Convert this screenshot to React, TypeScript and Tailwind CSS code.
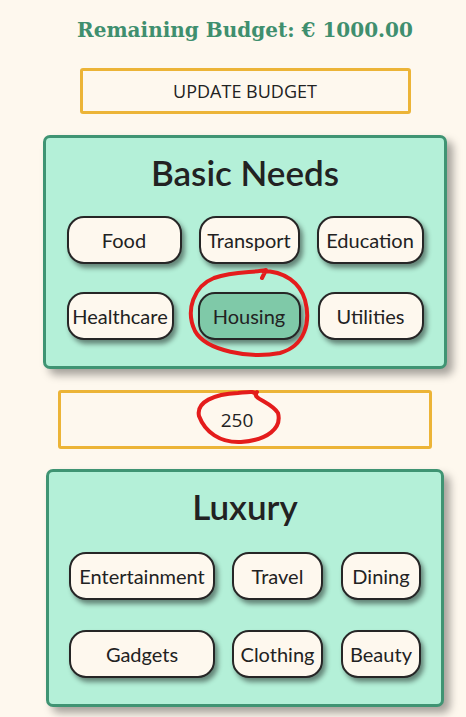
import React, { useState } from 'react';

const basicRows = [
  [
    { label: 'Food', cls: 'w-[115px]' },
    { label: 'Transport', cls: 'ml-[17px] w-[101px]' },
    { label: 'Education', cls: 'ml-[17px] w-[107px]' },
  ],
  [
    { label: 'Healthcare', cls: 'w-[107px]' },
    { label: 'Housing', cls: 'ml-[24px] w-[103px]' },
    { label: 'Utilities', cls: 'ml-[17px] w-[106px]' },
  ],
];

const luxuryRows = [
  [
    { label: 'Entertainment', cls: 'w-[146px]' },
    { label: 'Travel', cls: 'ml-[17px] w-[91px]' },
    { label: 'Dining', cls: 'ml-[18px] w-[80px]' },
  ],
  [
    { label: 'Gadgets', cls: 'w-[146px]' },
    { label: 'Clothing', cls: 'ml-[17px] w-[91px]' },
    { label: 'Beauty', cls: 'ml-[18px] w-[80px]' },
  ],
];

type Chip = { label: string; cls: string };

const CategoryCard = ({
  title,
  rows,
  selected,
  onSelect,
  className,
  rowsClass,
}: {
  title: string;
  rows: Chip[][];
  selected: string;
  onSelect: (v: string) => void;
  className: string;
  rowsClass: string;
}) => (
  <div
    className={`flex flex-col items-center rounded-[7px] border-[3px] border-[#3f9473] bg-[#b4f0d8] pt-[13px] pb-[26px] shadow-[6px_6px_8px_rgba(0,0,0,0.35)] ${className}`}
  >
    <h2 className="h-[42px] text-[35px] leading-[42px] font-semibold text-[#222]">
      {title}
    </h2>
    <div className={`flex flex-col ${rowsClass}`}>
      {rows.map((row, i) => (
        <div key={i} className="flex flex-row">
          {row.map((chip) => (
            <button
              key={chip.label}
              onClick={() => onSelect(chip.label)}
              className={`h-[48px] rounded-[17px] border-2 border-[#262626] text-[20px] text-[#222] shadow-[3px_4px_5px_rgba(0,0,0,0.45)] ${
                selected === chip.label ? 'bg-[#7fc9a8]' : 'bg-[#fef8ee]'
              } ${chip.cls}`}
            >
              {chip.label}
            </button>
          ))}
        </div>
      ))}
    </div>
  </div>
);

const App = () => {
  const [basic, setBasic] = useState('Housing');
  const [luxury, setLuxury] = useState('');
  const [amount, setAmount] = useState('250');

  return (
    <div
      className="relative min-h-[717px] w-full bg-[#fef8ee]"
      style={{ fontFamily: 'Lato, "Open Sans", sans-serif' }}
    >
      <div className="flex flex-col items-center pl-[24px] pt-[16px] pb-[10px]">
        <h1
          className="h-[28px] text-[20px] leading-[28px] font-bold text-[#3f8f6e]"
          style={{ fontFamily: '"DejaVu Serif", serif' }}
        >
          Remaining Budget: € 1000.00
        </h1>
        <button
          className="mt-[24px] h-[46px] w-[331px] rounded-[3px] border-[3px] border-[#ecb437] bg-[#fef8ee] text-[18px] text-[#222]"
          style={{ fontFamily: '"Open Sans", sans-serif' }}
        >
          UPDATE BUDGET
        </button>
        <CategoryCard
          title="Basic Needs"
          rows={basicRows}
          selected={basic}
          onSelect={setBasic}
          className="mt-[21px] w-[404px]"
          rowsClass="mt-[23px] gap-[28px]"
        />
        <input
          value={amount}
          onChange={(e) => setAmount(e.target.value)}
          className="mt-[21px] h-[59px] w-[374px] rounded-[3px] border-[3px] border-[#ecb437] bg-[#fef8ee] pr-[16px] text-center text-[19px] text-[#222] outline-none"
          style={{ fontFamily: '"Open Sans", sans-serif' }}
        />
        <CategoryCard
          title="Luxury"
          rows={luxuryRows}
          selected={luxury}
          onSelect={setLuxury}
          className="mt-[20px] w-[398px]"
          rowsClass="mt-[25px] gap-[30px]"
        />
      </div>

      {/* hand-drawn annotations */}
      <svg
        className="pointer-events-none absolute top-0 left-0"
        width="466"
        height="717"
        fill="none"
        stroke="#e41c1c"
        strokeWidth="4"
        strokeLinecap="round"
        strokeLinejoin="round"
      >
        <path d="M262 271 C285 271 300 283 305 300 C311 322 305 346 280 353 C250 359 206 351 195 331 C185 310 194 286 214 278 C234 271 252 273 266 270 L262 278" />
        <path d="M257 392 C251 399 270 401 278 413 C282 428 268 440 241 442 C220 443 205 432 199 416 C196 402 214 394 238 393 C248 392 256 390 256 396" />
      </svg>
    </div>
  );
};

export default App;
